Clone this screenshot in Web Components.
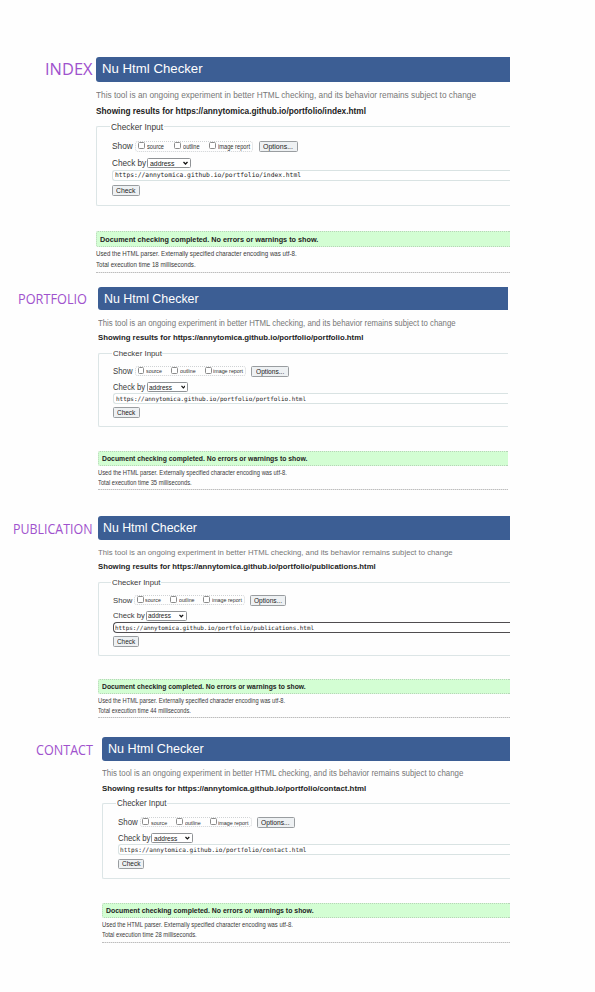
<!DOCTYPE html>
<html lang="en">
<head>
<meta charset="utf-8">
<title>Nu Html Checker results</title>
<style>
html, body { margin: 0; background: #fefefe; }
body { width: 595px; height: 992px; overflow: hidden; font-family: "Liberation Sans", Arial, sans-serif; }
</style>
</head>
<body>
<results-sheet></results-sheet>
<script>
// One line of text stretched horizontally to a given width.
class FitText extends HTMLElement {
  connectedCallback() {
    const root = this.attachShadow({ mode: 'open' });
    root.innerHTML = `<style>:host{display:block;white-space:nowrap;flex:none}
      span{display:inline-block;transform-origin:0 50%}</style><span><slot></slot></span>`;
    const span = root.querySelector('span');
    const width = parseFloat(this.getAttribute('w'));
    span.style.transform = `scaleX(${width / span.getBoundingClientRect().width})`;
    this.style.width = width + 'px';
  }
}
customElements.define('fit-text', FitText);

class CheckOption extends HTMLElement {
  connectedCallback() {
    this.attachShadow({ mode: 'open' }).innerHTML = `<style>
      :host{display:flex;align-items:center;flex:none;gap:calc(var(--u)*1.7);color:#333;font-size:calc(var(--u)*6.4)}
      i{box-sizing:border-box;width:calc(var(--u)*7.2);height:calc(var(--u)*7.2);border:1px solid #8c8c8c;border-radius:1.5px;background:#fff;margin-top:calc(var(--u)*-1.6)}
      </style><i></i><slot></slot>`;
  }
}
customElements.define('check-option', CheckOption);

class PushButton extends HTMLElement {
  connectedCallback() {
    this.attachShadow({ mode: 'open' }).innerHTML = `<style>
      :host{display:flex;box-sizing:border-box;align-items:center;justify-content:center;flex:none;height:calc(var(--u)*11.4);
      border:1px solid #999da0;border-radius:1.5px;background:#eef1f3;color:#222;font-size:calc(var(--u)*7.4)}
      </style><slot></slot>`;
  }
}
customElements.define('push-button', PushButton);

class SelectBox extends HTMLElement {
  connectedCallback() {
    this.attachShadow({ mode: 'open' }).innerHTML = `<style>
      :host{display:flex;box-sizing:border-box;align-items:center;justify-content:space-between;flex:none;width:calc(var(--u)*44);height:calc(var(--u)*10.2);
      border:1px solid #909396;border-radius:1.5px;background:#fff;color:#222;font-size:calc(var(--u)*7.2);padding:0 calc(var(--u)*1.8)}
      svg{width:calc(var(--u)*5);height:calc(var(--u)*4)}
      </style><slot></slot><svg viewBox="0 0 5 4"><path d="M.5 1l2 2 2-2" fill="none" stroke="#111" stroke-width="1.3"/></svg>`;
  }
}
customElements.define('select-box', SelectBox);

class CheckerPanel extends HTMLElement {
  connectedCallback() {
    const s = parseFloat(this.getAttribute('scale'));
    const w = n => (n * s).toFixed(2);
    const url = 'https://annytomica.github.io/portfolio/' + this.getAttribute('page');
    this.style.setProperty('--u', s + 'px');
    this.attachShadow({ mode: 'open' }).innerHTML = `<style>
      :host{display:block;flex:1;min-width:0;color:#3a3a3a}
      *{box-sizing:border-box}
      header,.line,.row,.done,.url{display:flex;align-items:center}
      header{height:calc(var(--u)*25.2);background:#3c5e94;color:#fff;font-size:calc(var(--u)*13.6);padding-left:calc(var(--u)*5.6);padding-bottom:1px;border-radius:3px 0 0 3px}
      .tag{height:calc(var(--u)*14);margin-top:calc(var(--u)*6.5);color:#777;font-size:calc(var(--u)*8.7)}
      .show{height:calc(var(--u)*14);margin-top:calc(var(--u)*1.5);color:#222;font-weight:bold;font-size:calc(var(--u)*8.3)}
      .box{height:calc(var(--u)*79.4);margin-top:calc(var(--u)*8.7);border:1px solid #dce5e6;border-right:0;border-radius:2px 0 0 2px;padding-left:calc(var(--u)*15)}
      .legend{display:flex;align-items:center;width:max-content;height:calc(var(--u)*12);margin:calc(var(--u)*-6.5) 0 0 calc(var(--u)*-2);padding:0 1px;background:#fefefe;font-size:calc(var(--u)*8.6)}
      .row{font-size:calc(var(--u)*8.7)}
      .opts{height:calc(var(--u)*11.4);margin-top:calc(var(--u)*7.8)}
      .group{display:flex;align-items:center;width:calc(var(--u)*118);height:calc(var(--u)*10.4);margin:0 calc(var(--u)*5.4) 0 calc(var(--u)*2.4);padding-left:calc(var(--u)*1.6);border:1px dotted #cfd2d4;border-radius:3px}
      .by{height:calc(var(--u)*10.2);margin-top:calc(var(--u)*6.1);gap:calc(var(--u)*1)}
      .url{height:calc(var(--u)*11.6);margin-top:calc(var(--u)*1.1);border:1px solid #d9e3e3;border-right:0;border-radius:3px 0 0 3px;padding-left:calc(var(--u)*1.8);font-family:"DejaVu Sans Mono",monospace;font-size:calc(var(--u)*6.4);color:#222;background:#fff}
      :host([focused]) .url{border:solid #504d50;border-width:1.5px 0 1.5px 1.5px;border-radius:4px 0 0 4px}
      .go{width:calc(var(--u)*28);margin-top:calc(var(--u)*3.6)}
      .done{height:calc(var(--u)*15.8);margin-top:calc(var(--u)*25.6);padding-left:calc(var(--u)*3.2);background:#d3fed3;border:1px dotted #b7d4b8;border-right:0;border-radius:2px 0 0 2px;color:#222;font-weight:bold;font-size:calc(var(--u)*7.3)}
      .info{height:calc(var(--u)*10);margin-top:calc(var(--u)*1.6);font-size:calc(var(--u)*6.8)}
      .info+.info{margin-top:calc(var(--u)*.8)}
      hr{margin:calc(var(--u)*2.4) 0 0;border:0;border-top:1px dotted #bdbdbd;background:#e2e2e2;height:1px}
      </style>
      <header><fit-text w="${w(100.6)}">Nu Html Checker</fit-text></header>
      <div class="line tag"><fit-text w="${w(380)}">This tool is an ongoing experiment in better HTML checking, and its behavior remains subject to change</fit-text></div>
      <div class="line show"><fit-text w="${this.getAttribute('heading-width')}">Showing results for ${url}</fit-text></div>
      <div class="box">
        <div class="legend"><fit-text w="${w(52)}">Checker Input</fit-text></div>
        <div class="row opts"><fit-text w="${w(20.8)}">Show</fit-text>
          <div class="group">
            <check-option><fit-text w="${w(17)}">source</fit-text></check-option>
            <check-option style="margin-left:calc(var(--u)*10)"><fit-text w="${w(16.6)}">outline</fit-text></check-option>
            <check-option style="margin-left:calc(var(--u)*10)"><fit-text w="${w(32)}">image report</fit-text></check-option>
          </div>
          <push-button style="width:calc(var(--u)*39.6)"><fit-text w="${w(30)}">Options...</fit-text></push-button>
        </div>
        <div class="row by"><fit-text w="${w(34.2)}">Check by</fit-text><select-box><fit-text w="${w(24.5)}">address</fit-text></select-box></div>
        <div class="url"><fit-text w="${this.getAttribute('url-width')}">${url}</fit-text></div>
        <push-button class="go"><fit-text w="${w(19.4)}">Check</fit-text></push-button>
      </div>
      <div class="done"><fit-text w="${w(218.3)}">Document checking completed. No errors or warnings to show.</fit-text></div>
      <div class="line info"><fit-text w="${w(200.6)}">Used the HTML parser. Externally specified character encoding was utf-8.</fit-text></div>
      <div class="line info"><fit-text w="${w(99.6)}">Total execution time ${this.getAttribute('ms')} milliseconds.</fit-text></div>
      <hr>`;
  }
}
customElements.define('checker-panel', CheckerPanel);

// Page name in the left margin, with its checker panel slotted beside it.
class ResultEntry extends HTMLElement {
  connectedCallback() {
    const a = n => this.getAttribute(n);
    this.attachShadow({ mode: 'open' }).innerHTML = `<style>
      :host{display:flex;align-items:flex-start;box-sizing:border-box;width:${a('right')}px;height:${a('height')}px}
      aside{box-sizing:border-box;flex:none;display:flex;align-items:center;width:${a('left')}px;height:24px;margin-top:${a('drop')}px;padding-left:${a('label-x')}px;
      font-family:"Open Sans","Noto Sans",sans-serif;font-size:${a('size')}px;line-height:1;color:#a052cd}
      </style><aside><fit-text w="${a('label-width')}">${a('label')}</fit-text></aside><slot></slot>`;
  }
}
customElements.define('result-entry', ResultEntry);

class ResultsSheet extends HTMLElement {
  connectedCallback() {
    this.attachShadow({ mode: 'open' }).innerHTML = `<style>:host{display:flex;flex-direction:column;padding-top:56.6px}</style>
      <result-entry label="INDEX" label-x="45" label-width="47.5" size="17" left="96" right="509.7" drop="0" height="230.2">
        <checker-panel scale="1" page="index.html" heading-width="270" url-width="186" ms="18"></checker-panel></result-entry>
      <result-entry label="PORTFOLIO" label-x="18" label-width="69" size="14.2" left="98.3" right="508" drop="0" height="229.6">
        <checker-panel scale=".941" page="portfolio.html" heading-width="265.3" url-width="190" ms="35"></checker-panel></result-entry>
      <result-entry label="PUBLICATION" label-x="13" label-width="79.5" size="14.2" left="97.8" right="509.7" drop="0.5" height="220.3">
        <checker-panel focused scale=".933" page="publications.html" heading-width="277.7" url-width="199" ms="44"></checker-panel></result-entry>
      <result-entry label="CONTACT" label-x="36.3" label-width="57" size="14.2" left="102.3" right="509.7" drop="1.5" height="230">
        <checker-panel scale=".951" page="contact.html" heading-width="264.2" url-width="186.5" ms="28"></checker-panel></result-entry>`;
  }
}
customElements.define('results-sheet', ResultsSheet);
</script>
</body>
</html>
